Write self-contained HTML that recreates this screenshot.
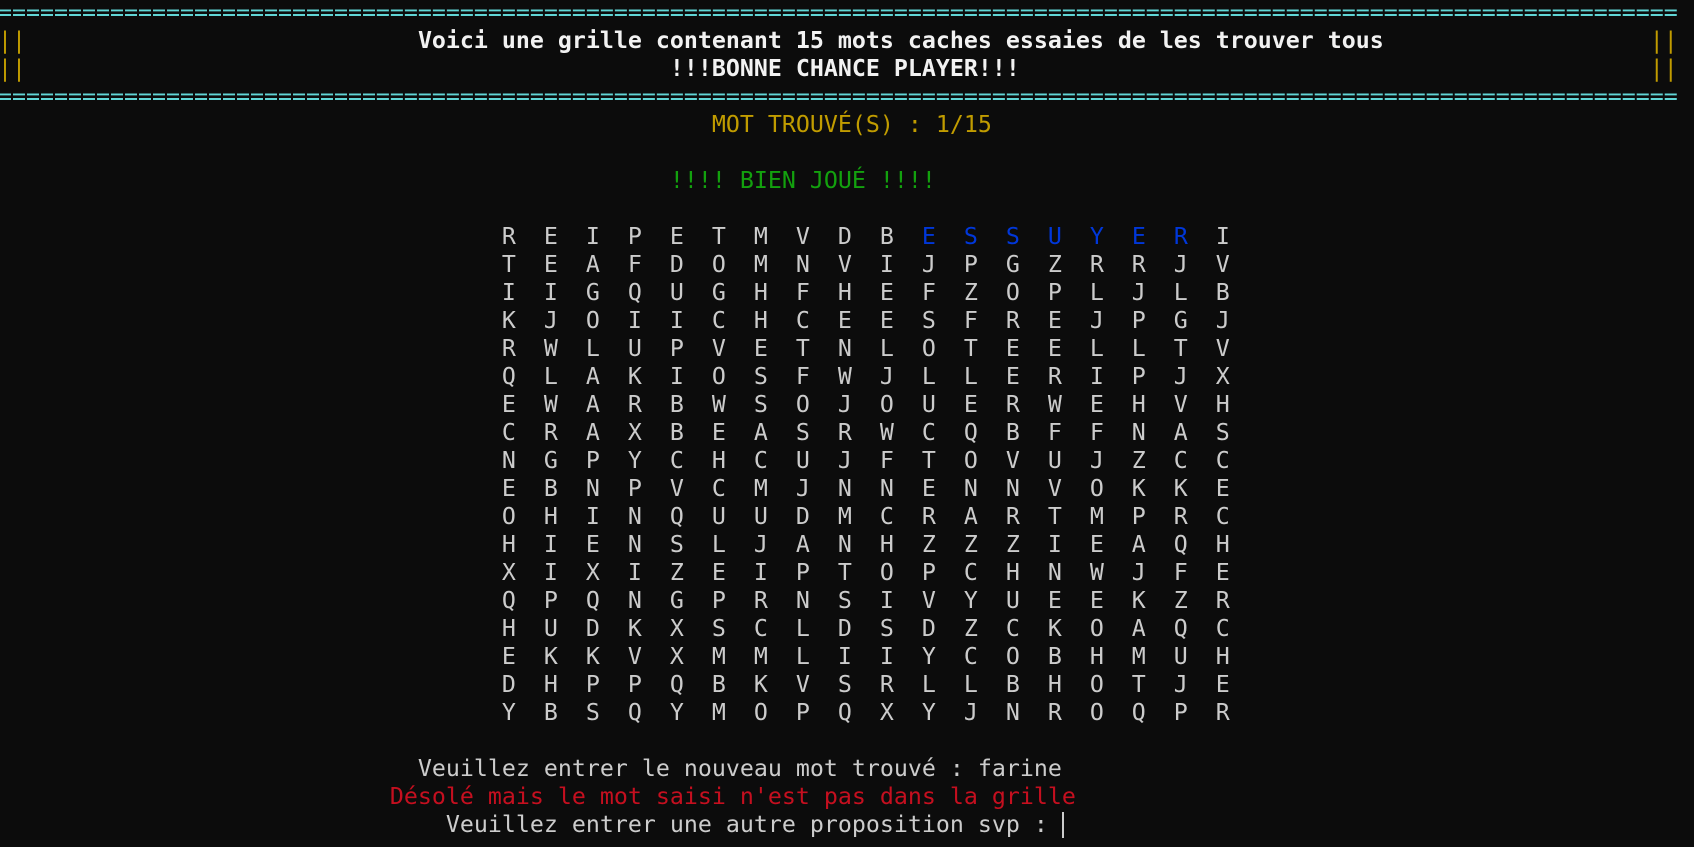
<!DOCTYPE html>
<html><head><meta charset="utf-8">
<style>
html,body{margin:0;padding:0;background:#0c0c0c;width:1694px;height:847px;overflow:hidden}
pre{position:absolute;left:-2px;top:-1px;margin:0;font-family:"DejaVu Sans Mono","Liberation Mono",monospace;font-size:23.25px;line-height:28px;color:#cccccc;white-space:pre}
.c{color:#61d6d6}.y{color:#c19c00}.w{color:#f2f2f2;font-weight:bold}.b{color:#0037da}.g{color:#13a10e}.r{color:#c50f1f}
.cur{display:inline-block;width:2px;height:26px;background:#ccc;vertical-align:-6px}
</style></head><body>
<pre><span class="c">========================================================================================================================</span>
<span class="y">||</span>                            <span class="w">Voici une grille contenant 15 mots caches essaies de les trouver tous</span>                   <span class="y">||</span>
<span class="y">||</span>                                              <span class="w">!!!BONNE CHANCE PLAYER!!!</span>                                             <span class="y">||</span>
<span class="c">========================================================================================================================</span>
<span class="y">                                                   MOT TROUVÉ(S) : 1/15</span>

<span class="g">                                                !!!! BIEN JOUÉ !!!!</span>

                                    R  E  I  P  E  T  M  V  D  B  <span class="b">E  S  S  U  Y  E  R</span>  I
                                    T  E  A  F  D  O  M  N  V  I  J  P  G  Z  R  R  J  V
                                    I  I  G  Q  U  G  H  F  H  E  F  Z  O  P  L  J  L  B
                                    K  J  O  I  I  C  H  C  E  E  S  F  R  E  J  P  G  J
                                    R  W  L  U  P  V  E  T  N  L  O  T  E  E  L  L  T  V
                                    Q  L  A  K  I  O  S  F  W  J  L  L  E  R  I  P  J  X
                                    E  W  A  R  B  W  S  O  J  O  U  E  R  W  E  H  V  H
                                    C  R  A  X  B  E  A  S  R  W  C  Q  B  F  F  N  A  S
                                    N  G  P  Y  C  H  C  U  J  F  T  O  V  U  J  Z  C  C
                                    E  B  N  P  V  C  M  J  N  N  E  N  N  V  O  K  K  E
                                    O  H  I  N  Q  U  U  D  M  C  R  A  R  T  M  P  R  C
                                    H  I  E  N  S  L  J  A  N  H  Z  Z  Z  I  E  A  Q  H
                                    X  I  X  I  Z  E  I  P  T  O  P  C  H  N  W  J  F  E
                                    Q  P  Q  N  G  P  R  N  S  I  V  Y  U  E  E  K  Z  R
                                    H  U  D  K  X  S  C  L  D  S  D  Z  C  K  O  A  Q  C
                                    E  K  K  V  X  M  M  L  I  I  Y  C  O  B  H  M  U  H
                                    D  H  P  P  Q  B  K  V  S  R  L  L  B  H  O  T  J  E
                                    Y  B  S  Q  Y  M  O  P  Q  X  Y  J  N  R  O  Q  P  R

                              Veuillez entrer le nouveau mot trouvé : farine
<span class="r">                            Désolé mais le mot saisi n'est pas dans la grille</span>
                                Veuillez entrer une autre proposition svp : <span class="cur"></span></pre>
</body></html>
